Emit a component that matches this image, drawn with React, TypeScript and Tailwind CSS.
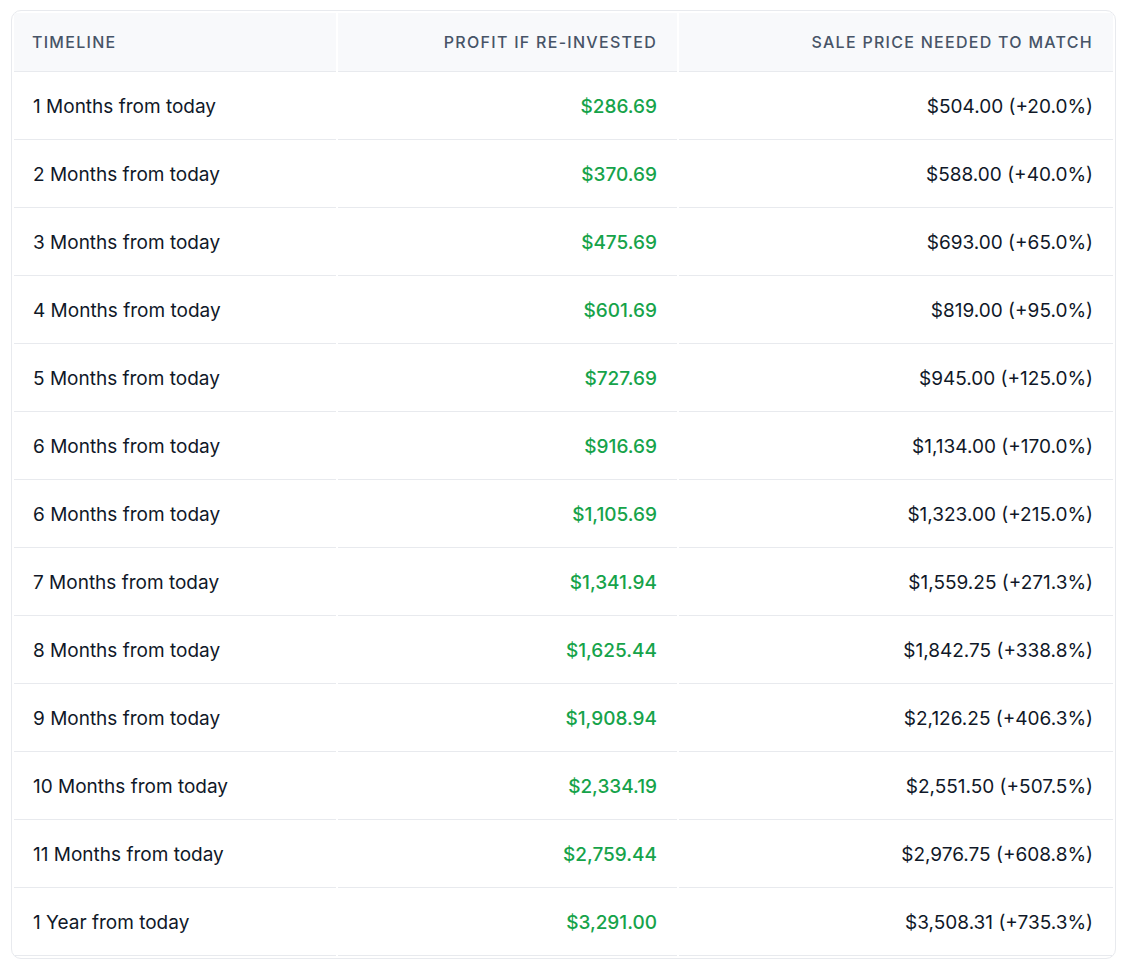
import React from 'react'

interface Row {
  timeline: string
  profit: string
  salePrice: string
}

const rows: Row[] = [
  { timeline: '1 Months from today', profit: '$286.69', salePrice: '$504.00 (+20.0%)' },
  { timeline: '2 Months from today', profit: '$370.69', salePrice: '$588.00 (+40.0%)' },
  { timeline: '3 Months from today', profit: '$475.69', salePrice: '$693.00 (+65.0%)' },
  { timeline: '4 Months from today', profit: '$601.69', salePrice: '$819.00 (+95.0%)' },
  { timeline: '5 Months from today', profit: '$727.69', salePrice: '$945.00 (+125.0%)' },
  { timeline: '6 Months from today', profit: '$916.69', salePrice: '$1,134.00 (+170.0%)' },
  { timeline: '6 Months from today', profit: '$1,105.69', salePrice: '$1,323.00 (+215.0%)' },
  { timeline: '7 Months from today', profit: '$1,341.94', salePrice: '$1,559.25 (+271.3%)' },
  { timeline: '8 Months from today', profit: '$1,625.44', salePrice: '$1,842.75 (+338.8%)' },
  { timeline: '9 Months from today', profit: '$1,908.94', salePrice: '$2,126.25 (+406.3%)' },
  { timeline: '10 Months from today', profit: '$2,334.19', salePrice: '$2,551.50 (+507.5%)' },
  { timeline: '11 Months from today', profit: '$2,759.44', salePrice: '$2,976.75 (+608.8%)' },
  { timeline: '1 Year from today', profit: '$3,291.00', salePrice: '$3,508.31 (+735.3%)' },
]

export default function App() {
  return (
    <div className="min-h-screen bg-white pt-[10px] pl-[11px] font-['Inter',sans-serif]">
      <div className="w-[1105px] border border-[#e8eaee] rounded-[10px] overflow-hidden">
        <table className="w-full border-separate border-spacing-[2px] table-fixed">
          <thead>
            {/* Header */}
            <tr className="bg-[#f8f9fb]">
              <th className="w-[322px] bg-[#f8f9fb] border-b border-[#e8eaee] pl-[18px] pr-5 py-[17px] text-left text-[16px] leading-6 font-medium tracking-[0.08em] text-[#475467] uppercase">
                Timeline
              </th>
              <th className="w-[339px] bg-[#f8f9fb] border-b border-[#e8eaee] px-5 py-[17px] text-right text-[16px] leading-6 font-medium tracking-[0.08em] text-[#475467] uppercase">
                Profit if re-invested
              </th>
              <th className="bg-[#f8f9fb] border-b border-[#e8eaee] px-5 py-[17px] text-right text-[16px] leading-6 font-medium tracking-[0.08em] text-[#475467] uppercase">
                Sale price needed to match
              </th>
            </tr>
          </thead>
          <tbody>
            {rows.map((row, i) => (
              <tr key={i}>
                <td className="border-b border-[#e8eaee] pl-[19px] pr-5 py-[18.5px] text-[19px] leading-7 text-[#101828]">
                  {row.timeline}
                </td>
                <td className="border-b border-[#e8eaee] px-5 py-[18.5px] text-right text-[19px] leading-7 font-medium text-[#16a34a]">
                  {row.profit}
                </td>
                <td className="border-b border-[#e8eaee] px-5 py-[18.5px] text-right text-[19px] leading-7 text-[#101828]">
                  {row.salePrice}
                </td>
              </tr>
            ))}
          </tbody>
        </table>
      </div>
    </div>
  )
}
